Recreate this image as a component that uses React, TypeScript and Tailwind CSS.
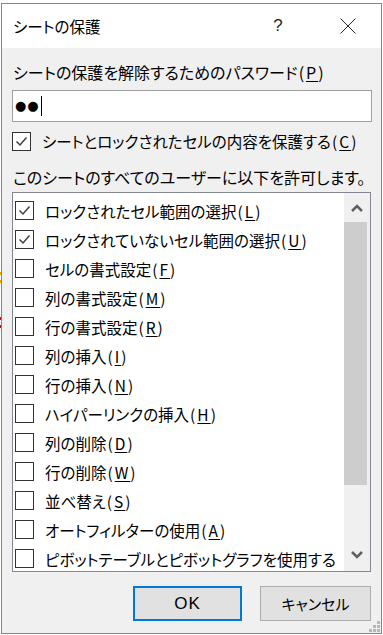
import React from "react";

const FONT = "font-['Noto_Sans_CJK_JP','Noto_Sans',sans-serif]";

function Check({ checked }: { checked: boolean }) {
  return (
    <div className="w-[19px] h-[19px] border border-[#333333] bg-white shrink-0 flex items-center justify-center">
      {checked && (
        <svg width="17" height="17" viewBox="0 0 17 17">
          <polyline points="3.5,8.5 7,12 13.5,4.5" fill="none" stroke="#404040" strokeWidth="1.5" />
        </svg>
      )}
    </div>
  );
}

function Label({ text, acc }: { text: string; acc?: string }) {
  return (
    <span className="whitespace-nowrap [font-feature-settings:'palt']">
      {text}
      {acc && (
        <span className="ml-[1px] tracking-[2px]">
          (<span className="underline underline-offset-2">{acc}</span>)
        </span>
      )}
    </span>
  );
}

const items: { t: string; a?: string; c: boolean }[] = [
  { t: "ロックされたセル範囲の選択", a: "L", c: true },
  { t: "ロックされていないセル範囲の選択", a: "U", c: true },
  { t: "セルの書式設定", a: "F", c: false },
  { t: "列の書式設定", a: "M", c: false },
  { t: "行の書式設定", a: "R", c: false },
  { t: "列の挿入", a: "I", c: false },
  { t: "行の挿入", a: "N", c: false },
  { t: "ハイパーリンクの挿入", a: "H", c: false },
  { t: "列の削除", a: "D", c: false },
  { t: "行の削除", a: "W", c: false },
  { t: "並べ替え", a: "S", c: false },
  { t: "オートフィルターの使用", a: "A", c: false },
  { t: "ピボットテーブルとピボットグラフを使用する", c: false },
];

export default function App() {
  return (
    <div className={`w-[383px] h-[635px] bg-white overflow-hidden relative ${FONT} text-black`}>
      {/* background spreadsheet marks peeking at the left edge */}
      <div className="absolute left-0 top-[272px] w-[1px] h-[3px] bg-[#f0a000]" />
      <div className="absolute left-0 top-[280px] w-[1px] h-[3px] bg-[#f0a000]" />
      <div className="absolute left-0 top-[317px] w-[1px] h-[3px] bg-[#e00000]" />
      <div className="absolute left-0 top-[325px] w-[1px] h-[3px] bg-[#e00000]" />

      <div className="ml-[1px] mt-[3px] w-[381px] h-[631px] border border-[#858585] flex flex-col">
        {/* title bar */}
        <div className="h-[44px] bg-white flex items-center shrink-0">
          <div className="pl-[11px] text-[15.5px] leading-[20px] [font-feature-settings:'palt']">シートの保護</div>
          <div className="ml-auto w-[46px] flex items-center justify-center text-[17px] text-[#222] font-['Liberation_Sans',sans-serif] mr-[24px]">
            ?
          </div>
          <div className="w-[46px] mr-[10px] flex items-center justify-center">
            <svg width="16" height="16" viewBox="0 0 16 16">
              <path d="M0.5 0.5 L15.5 15.5 M15.5 0.5 L0.5 15.5" stroke="#222" strokeWidth="1" fill="none" />
            </svg>
          </div>
        </div>

        {/* body */}
        <div className="flex-1 bg-[#f0f0f0] pl-[10px] pt-[14px] flex flex-col text-[15.5px] leading-[20px]">
          <div className="pl-[1px] text-[16px]">
            <Label text="シートの保護を解除するためのパスワード" acc="P" />
          </div>
          <div className="mt-[8px] w-[360px] h-[32px] border border-[#a0a0a0] bg-white flex items-center pl-[2px]">
            <span className="text-[13px] tracking-[1px] font-['DejaVu_Sans',sans-serif]">●●</span>
            <div className="w-[1px] h-[20px] bg-black ml-[1px]" />
          </div>
          <div className="mt-[9px] flex items-center h-[20px]">
            <Check checked />
            <div className="ml-[11px]">
              <Label text="シートとロックされたセルの内容を保護する" acc="C" />
            </div>
          </div>
          <div className="mt-[16px] pl-[1px] text-[16px]">
            <Label text="このシートのすべてのユーザーに以下を許可します。" />
          </div>

          {/* list */}
          <div className="mt-[5px] w-[359px] h-[380px] border border-[#828790] bg-white flex overflow-hidden">
            <div className="flex-1 pl-[2px] pt-[3px] overflow-hidden">
              {items.map((it, i) => (
                <div key={i} className="h-[29px] flex items-center">
                  <Check checked={it.c} />
                  <div className="ml-[11px]">
                    <Label text={it.t} acc={it.a} />
                  </div>
                </div>
              ))}
            </div>
            <div className="w-[26px] bg-[#f0f0f0] flex flex-col shrink-0">
              <div className="h-[29px] flex items-center justify-center shrink-0">
                <svg width="12" height="8" viewBox="0 0 12 8">
                  <polyline points="1,7 6,2 11,7" fill="none" stroke="#606060" strokeWidth="2.5" />
                </svg>
              </div>
              <div className="h-[263px] w-[23px] bg-[#cdcdcd] shrink-0" />
              <div className="flex-1 flex items-end justify-center pb-[12px]">
                <svg width="12" height="8" viewBox="0 0 12 8">
                  <polyline points="1,1 6,6 11,1" fill="none" stroke="#606060" strokeWidth="2.5" />
                </svg>
              </div>
            </div>
          </div>

          {/* buttons */}
          <div className="mt-[14px] flex">
            <div className="ml-[121px] w-[109px] h-[35px] border-2 border-[#0078d7] bg-[#e1e1e1] flex items-center justify-center font-['Liberation_Sans',sans-serif] text-[17px] tracking-[1px]">
              OK
            </div>
            <div className="ml-[18px] w-[111px] h-[35px] border border-[#adadad] bg-[#e1e1e1] flex items-center justify-center text-[15px] [font-feature-settings:'palt']">
              キャンセル
            </div>
          </div>

          {/* resize grip */}
          <div className="mt-auto self-end mr-[1px] mb-[1px] grid grid-cols-3 gap-[1px]">
            <div className="w-[3px] h-[3px]" />
            <div className="w-[3px] h-[3px]" />
            <div className="w-[3px] h-[3px] bg-[#b8b8b8]" />
            <div className="w-[3px] h-[3px]" />
            <div className="w-[3px] h-[3px] bg-[#b8b8b8]" />
            <div className="w-[3px] h-[3px] bg-[#b8b8b8]" />
            <div className="w-[3px] h-[3px] bg-[#b8b8b8]" />
            <div className="w-[3px] h-[3px] bg-[#b8b8b8]" />
            <div className="w-[3px] h-[3px] bg-[#b8b8b8]" />
          </div>
        </div>
      </div>
    </div>
  );
}
